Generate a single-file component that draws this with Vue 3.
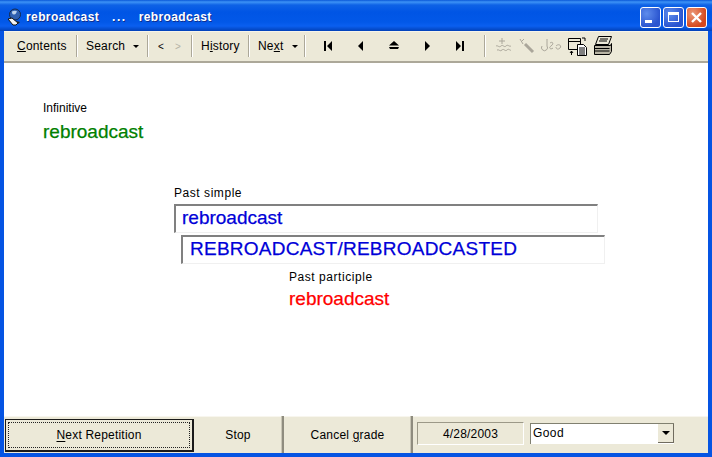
<script setup>
const arrows = [
  { d: 'M0 0h2v10H0zM8 0v10L3 5z', w: 8 },
  { d: 'M6 0v10L1 5z', w: 8 },
  { d: 'M5 0l5 4.500H0zM0 6h10l-1 2H1z', w: 10 },
  { d: 'M2 0v10l5-5z', w: 8 },
  { d: 'M0 0v10l5-5zM6 0h2v10H6z', w: 8 }
]
</script>

<template>
  <div class="window">
    <header class="titlebar">
      <svg class="appicon" width="18" height="18" viewBox="0 0 18 18">
        <circle cx="9" cy="6.500" r="5.500" fill="#2f5fb0" stroke="#12284f" />
        <path d="M6 3.500c2-1 4-1 5 0-1 1-1 3-3 3S6 5 6 3.500z" fill="#bcd2ee" />
        <path d="M2 11l4-1 6 5-2 2H7z" fill="#f4f4f4" stroke="#111" stroke-width="1" />
        <path d="M10 13l4 1-2 2z" fill="#222" />
      </svg>
      <span class="title">rebroadcast</span>
      <span class="title dots">...</span>
      <span class="title">rebroadcast</span>
      <div class="winbtns">
        <button class="wb blue"><i class="min"></i></button>
        <button class="wb blue"><i class="max"></i></button>
        <button class="wb red">
          <svg width="13" height="13" viewBox="0 0 13 13"><path d="M2 2l9 9M11 2l-9 9" stroke="#fff" stroke-width="2.400" /></svg>
        </button>
      </div>
    </header>

    <nav class="toolbar">
      <span class="tbtn first"><u>C</u>ontents</span>
      <span class="sep"></span>
      <span class="tbtn search">Search<b class="caret"></b></span>
      <span class="sep"></span>
      <span class="tbtn small"><span>&lt;</span><span class="dim">&gt;</span></span>
      <span class="sep"></span>
      <span class="tbtn history">H<u>i</u>story</span>
      <span class="sep"></span>
      <span class="tbtn nextb">Ne<u>x</u>t<b class="caret"></b></span>
      <span class="sep"></span>
      <div class="arrows">
        <span v-for="(a, i) in arrows" :key="i" class="arrow">
          <svg :width="a.w" height="10" :viewBox="`0 0 ${a.w} 10`"><path :d="a.d" fill="#000" /></svg>
        </span>
      </div>
      <span class="sep"></span>
      <div class="tools">
        <svg width="20" height="20" viewBox="0 0 20 20" fill="none" stroke="#aaa69a">
          <path d="M8 2v6M5 5h6M2 10c2-1 3 2 5 0s3 2 5 0 3 1 5 0M3 14c2-1 3 2 5 0s3 2 5 0 3 1 4 0" />
        </svg>
        <svg width="20" height="20" viewBox="0 0 20 20" fill="none" stroke="#aaa69a">
          <path d="M3 3l3 5M7 3L4 6" />
          <path d="M8 8l8 8" stroke-width="3" />
        </svg>
        <svg width="24" height="20" viewBox="0 0 24 20" fill="none" stroke="#aaa69a">
          <path d="M2 10a3 3 0 1 0 5 0V3M10 7c3-2 4 1 1 3s0 4 2 2M16 10c3-3 6 0 4 2s-4 1-4-1" />
        </svg>
        <svg class="big" width="22" height="22" viewBox="0 0 22 22" fill="none" stroke="#000">
          <path d="M1.500 3.500h12v11h-12zM1.500 6.500h12" />
          <path d="M10.500 9.500h6l3 3v8h-9z" fill="#fff" />
          <path d="M12 13h6M12 15h6M12 17h6M12 19h6M4.500 16v4M3 18l1.500-2 1.500 2M15 3h3v3" />
        </svg>
        <svg class="big" width="22" height="22" viewBox="0 0 22 22" fill="none" stroke="#000">
          <path d="M6.500 1.500h13l-3 8h-13z" fill="#ece9d8" />
          <path d="M8 4h8M7 6h8" />
          <path d="M2.500 10.500h16l1-2v8l-2 3h-15z" fill="#b9b5a5" />
          <path d="M2.500 13.500h15M2.500 16h15" />
        </svg>
      </div>
    </nav>

    <main class="content">
      <section class="infinitive">
        <div class="label">Infinitive</div>
        <div class="word green">rebroadcast</div>
      </section>
      <section class="simple">
        <div class="label wide">Past simple</div>
        <div class="field one">rebroadcast</div>
        <div class="field two">REBROADCAST/REBROADCASTED</div>
      </section>
      <section class="participle">
        <div class="label wide">Past participle</div>
        <div class="word red-text">rebroadcast</div>
      </section>
    </main>

    <footer class="bottombar">
      <div class="nextwrap">
        <button class="btn next"><span class="focus"><u>N</u>ext Repetition</span></button>
      </div>
      <button class="btn stop">Stop</button>
      <button class="btn cancel">Cancel <u>g</u>rade</button>
      <div class="date">4/28/2003</div>
      <div class="combo">
        <span>Good</span>
        <span class="drop"><b class="caret dark"></b></span>
      </div>
    </footer>
  </div>
</template>

<style>
html, body { margin: 0; padding: 0; background: #ece9d8; }
</style>

<style scoped>
.window {
  width: 712px;
  height: 457px;
  box-sizing: border-box;
  display: flex;
  flex-direction: column;
  overflow: hidden;
  background: #0554e3;
  padding: 0 4px 4px;
  font-family: "Liberation Sans", Arial, sans-serif;
  font-size: 12px;
  color: #000;
}
.titlebar {
  height: 31px;
  box-sizing: border-box;
  flex: none;
  margin: 0 -4px;
  padding: 3px 5px 0 6px;
  display: flex;
  align-items: center;
  background: linear-gradient(#0a58d8 0, #3d93f6 2px, #0e62e6 5px, #0055e5 12px, #0258e8 22px, #0a5ff0 26px, #0241b8 31px);
}
.appicon { flex: none; margin-right: 2px; }
.title {
  color: #fff;
  font-weight: bold;
  font-size: 12px;
  letter-spacing: 0.4px;
  white-space: pre;
  text-shadow: 1px 1px 0 #0f2f90;
}
.dots { margin: 0 12px 0 13px; letter-spacing: 1.500px; }
.winbtns { margin-left: auto; display: flex; gap: 2px; }
.wb {
  width: 21px;
  height: 21px;
  padding: 0;
  border: 1px solid #fff;
  border-radius: 3px;
  display: flex;
  align-items: center;
  justify-content: center;
  position: relative;
}
.wb.blue { background: radial-gradient(circle at 30% 30%, #5e8cec, #2a55d0 70%); }
.wb.red { background: radial-gradient(circle at 30% 30%, #ec9a7a, #d5481e 70%); }
.min { width: 7px; height: 3px; background: #fff; position: absolute; left: 4px; bottom: 4px; }
.max { width: 11px; height: 10px; box-sizing: border-box; border: 1px solid #fff; border-top-width: 3px; }

.toolbar {
  height: 32px;
  flex: none;
  box-sizing: border-box;
  background: #ece9d8;
  border-bottom: 2px solid #aca899;
  box-shadow: inset 0 1px 0 #f6f4ea;
  padding-left: 2px;
  display: flex;
  align-items: center;
  white-space: nowrap;
  letter-spacing: 0.2px;
}
.tbtn { display: flex; align-items: center; box-sizing: border-box; padding-left: 8px; height: 20px; flex: none; }
.tbtn.first { padding-left: 11px; width: 70px; }
.tbtn.search { width: 69px; }
.tbtn.small { gap: 11px; padding-left: 9px; width: 42px; font-size: 10px; }
.tbtn.history { width: 55px; }
.tbtn.nextb { width: 54px; }
.dim { color: #b5b2a5; }
.sep {
  width: 1px;
  height: 22px;
  background: #aca899;
  border-right: 1px solid #fff;
  flex: none;
}
.caret {
  display: inline-block;
  margin-left: 8px;
  border: 3px solid transparent;
  border-top: 3px solid #000;
  border-bottom: 0;
}
.arrows {
  width: 178px;
  flex: none;
  display: flex;
  align-items: center;
  gap: 23px;
  padding-left: 17px;
  box-sizing: border-box;
}
.arrow { display: flex; width: 10px; justify-content: center; }
.tools { display: flex; align-items: center; gap: 3px; padding-left: 8px; }

.content {
  flex: 1;
  min-height: 0;
  background: #fff;
  padding: 38px 0 0 39px;
}
.label { line-height: 14px; }
.label.wide { letter-spacing: 0.55px; }
.word { font-size: 19px; line-height: 21px; margin-top: 6px; -webkit-text-stroke: 0.25px currentColor; }
.green { color: #008000; }
.red-text { color: #ff0000; }
.simple { margin: 44px 0 0 131px; }
.field {
  box-sizing: border-box;
  color: #0000d8;
  font-size: 19px;
  -webkit-text-stroke: 0.25px currentColor;
  border-top: 2px solid #808080;
  border-left: 2px solid #808080;
  border-right: 1px solid #f0f0f0;
  border-bottom: 1px solid #f0f0f0;
  background: #fff;
  white-space: nowrap;
}
.one { width: 424px; height: 29px; margin-top: 4px; padding: 1px 6px; line-height: 21px; }
.two { width: 424px; height: 29px; margin: 2px 0 0 7px; padding: 1px 7px; line-height: 22px; letter-spacing: 0.25px; }
.participle { margin: 6px 0 0 246px; }
.participle .word { margin-top: 4px; }

.bottombar {
  height: 37px;
  flex: none;
  display: flex;
  align-items: stretch;
  background: #ece9d8;
  box-shadow: inset 0 1px 0 #f8f6ee;
  letter-spacing: 0.2px;
}
.btn {
  font: inherit;
  letter-spacing: inherit;
  color: #000;
  background: transparent;
  border: 0;
  padding: 0;
  border-right: 2px solid #8f8c7f;
  box-shadow: inset -1px 0 0 #c9c6b6;
}
.nextwrap {
  display: flex;
  padding: 3px 0 1px 1px;
  flex: none;
}
.next {
  width: 189px;
  border: 1px solid #1a1a1a;
  border-right-width: 2px;
  border-bottom-width: 2px;
  padding: 2px;
  box-shadow: none;
}
.focus {
  display: flex;
  width: 100%;
  height: 100%;
  align-items: center;
  justify-content: center;
  box-sizing: border-box;
  border: 1px dotted #222;
}
.btn u { text-underline-offset: 2px; }
.stop { width: 90px; }
.cancel { width: 129px; }
.date {
  width: 107px;
  height: 23px;
  margin: 6px 0 0 4px;
  box-sizing: border-box;
  border: 1px solid #9c9988;
  border-right-color: #fff;
  border-bottom-color: #fff;
  display: flex;
  align-items: center;
  justify-content: center;
}
.combo {
  width: 144px;
  height: 21px;
  margin: 7px 0 0 6px;
  box-sizing: border-box;
  background: #fff;
  border-top: 1px solid #808070;
  border-left: 1px solid #808070;
  display: flex;
  align-items: flex-start;
  padding: 2px 0 0 2px;
  position: relative;
  font-size: 12px;
  letter-spacing: 0.4px;
}
.drop {
  position: absolute;
  right: 0;
  top: 0;
  width: 16px;
  height: 19px;
  background: #ece9d8;
  border-right: 1px solid #706c5f;
  border-bottom: 1px solid #706c5f;
  box-sizing: border-box;
  display: flex;
  align-items: center;
  justify-content: center;
}
.caret.dark { margin: 0; border-width: 4px 4px 0; border-top-color: #000; }
</style>
